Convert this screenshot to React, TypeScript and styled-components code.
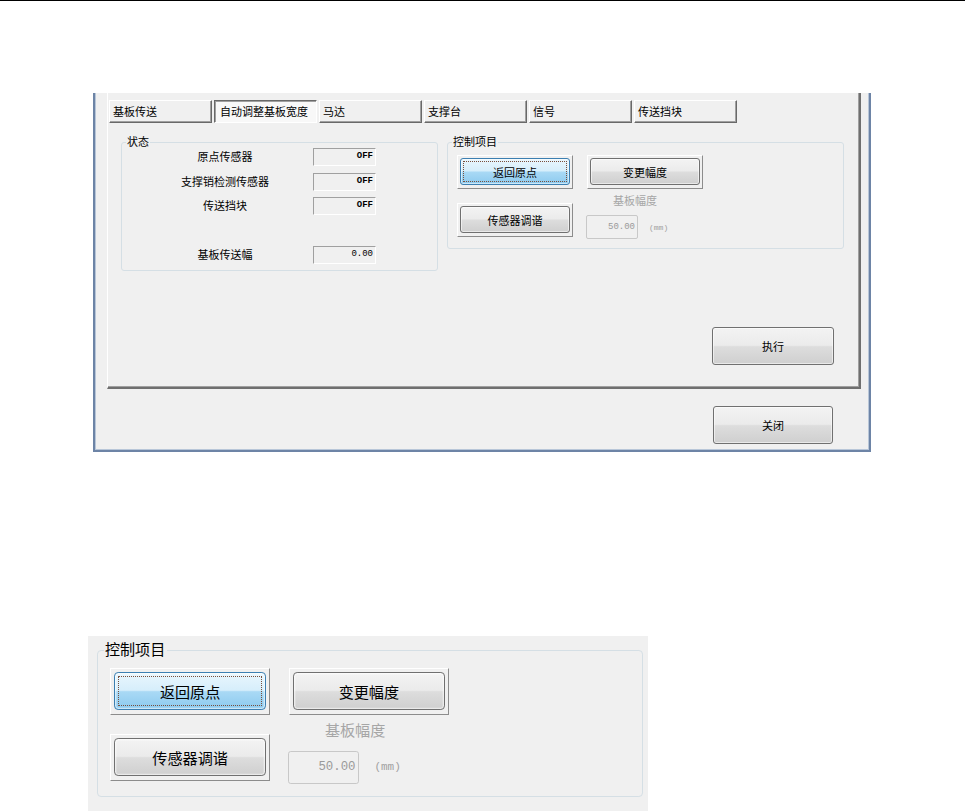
import React from "react";
import styled, { createGlobalStyle } from "styled-components";

const GlobalStyle = createGlobalStyle`
  html, body {
    margin: 0;
    padding: 0;
    background: #fff;
    overflow: hidden;
  }
  body {
    font-family: "Liberation Sans", "Noto Sans CJK SC", sans-serif;
    font-size: 11px;
    color: #000;
  }
`;

const tabs = ["基板传送", "自动调整基板宽度", "马达", "支撑台", "信号", "传送挡块"];
const activeTab = 1;

const statusRows = [
  { label: "原点传感器", value: "OFF", bold: true },
  { label: "支撑销检测传感器", value: "OFF", bold: true },
  { label: "传送挡块", value: "OFF", bold: true },
  { label: "基板传送幅", value: "0.00", spaced: true },
];

const ControlGroup: React.FC = () => (
  <Group $width={397}>
    <GroupTitle>控制项目</GroupTitle>
    <ControlGrid>
      <ButtonColumn>
        <ButtonFrame>
          <DialogButton $focused>返回原点</DialogButton>
        </ButtonFrame>
        <ButtonFrame>
          <DialogButton>传感器调谐</DialogButton>
        </ButtonFrame>
      </ButtonColumn>
      <WidthColumn>
        <ButtonFrame>
          <DialogButton>变更幅度</DialogButton>
        </ButtonFrame>
        <DisabledLabel>基板幅度</DisabledLabel>
        <WidthRow>
          <WidthInput>50.00</WidthInput>
          <Unit>(mm)</Unit>
        </WidthRow>
      </WidthColumn>
    </ControlGrid>
  </Group>
);

const App: React.FC = () => {
  return (
    <>
      <GlobalStyle />
      <TopRule />
      <Dialog>
        <TabPanel>
          <TabStrip>
            {tabs.map((tab, index) => (
              <Tab key={tab} $active={index === activeTab}>
                {tab}
              </Tab>
            ))}
          </TabStrip>
          <GroupsRow>
            <Group $width={317}>
              <GroupTitle>状态</GroupTitle>
              <StatusList>
                {statusRows.map((row) => (
                  <StatusRow key={row.label} $spaced={row.spaced}>
                    <StatusLabel>{row.label}</StatusLabel>
                    <ValueBox $bold={row.bold}>{row.value}</ValueBox>
                  </StatusRow>
                ))}
              </StatusList>
            </Group>
            <ControlGroup />
          </GroupsRow>
          <ExecuteRow>
            <DialogButton $w={122} $h={38}>
              执行
            </DialogButton>
          </ExecuteRow>
        </TabPanel>
        <Footer>
          <DialogButton $w={120} $h={38}>
            关闭
          </DialogButton>
        </Footer>
      </Dialog>
      <Closeup>
        <Magnifier>
          <ControlGroup />
        </Magnifier>
      </Closeup>
    </>
  );
};

export default App;

const TopRule = styled.div`
  height: 1px;
  background: #000;
`;

const Dialog = styled.div`
  box-sizing: border-box;
  width: 778px;
  margin: 92px 0 0 93px;
  background: #f0f0f0;
  border: 2px solid #6d84a6;
  border-top: none;
  box-shadow: inset 1px 0 0 #b8c6d8, inset -1px 0 0 #b8c6d8, inset 0 -1px 0 #b8c6d8;
`;

const TabPanel = styled.div`
  box-sizing: border-box;
  width: 754px;
  height: 296px;
  margin-left: 12px;
  padding-top: 7px;
  display: flex;
  flex-direction: column;
  border-left: 1px solid #fff;
  border-right: 2px solid #6f6f6f;
  border-bottom: 2px solid #6f6f6f;
  box-shadow: inset -1px -1px 0 #a0a0a0;
`;

const TabStrip = styled.div`
  display: flex;
  gap: 2px;
  padding-left: 1px;
`;

const Tab = styled.div<{ $active?: boolean }>`
  box-sizing: border-box;
  width: 103px;
  height: 23px;
  display: flex;
  align-items: center;
  padding: ${(p) => (p.$active ? "1px 0 0 5px" : "0 0 0 3px")};
  border: 1px solid;
  border-color: ${(p) =>
    p.$active ? "#696969 #fff #fff #696969" : "#fff #696969 #696969 #fff"};
  box-shadow: ${(p) =>
    p.$active ? "inset 1px 1px 0 #a0a0a0" : "inset -1px -1px 0 #a0a0a0"};
  background: ${(p) => (p.$active ? "#f8f8f8" : "#f0f0f0")};
  white-space: nowrap;
  line-height: 12px;
`;

const GroupsRow = styled.div`
  display: flex;
  align-items: flex-start;
  gap: 9px;
  margin-top: 13px;
  padding-left: 13px;
`;

const Group = styled.fieldset<{ $width: number }>`
  box-sizing: border-box;
  width: ${(p) => p.$width}px;
  min-width: 0;
  margin: 0;
  padding: 0;
  border: 1px solid #d5dfe5;
  border-radius: 3px;
`;

const GroupTitle = styled.legend`
  margin-left: 4px;
  padding: 0 1px;
  font-size: 11px;
  line-height: 12px;
`;

const StatusList = styled.div`
  display: flex;
  flex-direction: column;
  gap: 6.5px;
  padding-bottom: 6px;
`;

const StatusRow = styled.div<{ $spaced?: boolean }>`
  display: flex;
  align-items: center;
  height: 18px;
  margin-top: ${(p) => (p.$spaced ? "24.5px" : "0")};
`;

const StatusLabel = styled.span`
  width: 170px;
  margin-left: 18px;
  margin-right: 3px;
  text-align: center;
  line-height: 12px;
  white-space: nowrap;
`;

const ValueBox = styled.div<{ $bold?: boolean }>`
  box-sizing: border-box;
  width: 63px;
  height: 18px;
  padding: 1px 2px 0 0;
  border: 1px solid;
  border-color: #a0a0a0 #fff #fff #a0a0a0;
  background: #f0f0f0;
  font-family: "Liberation Mono", monospace;
  font-size: 9px;
  font-weight: ${(p) => (p.$bold ? "bold" : "normal")};
  line-height: 12px;
  text-align: right;
`;

const ControlGrid = styled.div`
  display: flex;
  gap: 14px;
  padding: 7px 0 9px 9px;
`;

const ButtonColumn = styled.div`
  display: flex;
  flex-direction: column;
  gap: 14px;
`;

const WidthColumn = styled.div`
  display: flex;
  flex-direction: column;
  width: 116px;
`;

const ButtonFrame = styled.div`
  box-sizing: border-box;
  width: 116px;
  height: 34px;
  padding: 2px 2px 3px 2px;
  border: 1px solid;
  border-color: #fff #8c8c8c #8c8c8c #fff;
`;

const DialogButton = styled.button<{ $focused?: boolean; $w?: number; $h?: number }>`
  position: relative;
  box-sizing: border-box;
  width: ${(p) => (p.$w ? `${p.$w}px` : "100%")};
  height: ${(p) => (p.$h ? `${p.$h}px` : "100%")};
  padding: 0;
  font-family: "Liberation Sans", "Noto Sans CJK SC", sans-serif;
  font-size: 11px;
  color: #000;
  border: 1px solid ${(p) => (p.$focused ? "#3c7fb1" : "#707070")};
  border-radius: 3px;
  background: ${(p) =>
    p.$focused
      ? "linear-gradient(#e9f6fd 0%, #d6eefb 48%, #a9d9f5 52%, #8ccaef 100%)"
      : "linear-gradient(#f3f3f3 0%, #ebebeb 48%, #dddddd 52%, #cfcfcf 100%)"};
  box-shadow: inset 0 0 0 1px rgba(255, 255, 255, 0.55);

  &::after {
    content: "";
    display: ${(p) => (p.$focused ? "block" : "none")};
    position: absolute;
    inset: 2px;
    border: 1px dotted #7a4f3c;
  }
`;

const DisabledLabel = styled.div`
  width: 96px;
  margin-top: 6px;
  text-align: center;
  line-height: 12px;
  color: #a6a6a6;
`;

const WidthRow = styled.div`
  display: flex;
  align-items: center;
  margin-top: 8px;
  margin-left: -1px;
`;

const WidthInput = styled.div`
  box-sizing: border-box;
  width: 52px;
  height: 24px;
  padding-right: 2px;
  border: 1px solid #c8c8c8;
  border-radius: 2px;
  background: #f0f0f0;
  font-family: "Liberation Mono", monospace;
  font-size: 9px;
  line-height: 22px;
  text-align: right;
  color: #9a9a9a;
`;

const Unit = styled.span`
  margin-left: 11px;
  font-family: "Liberation Mono", monospace;
  font-size: 8px;
  color: #a0a0a0;
`;

const ExecuteRow = styled.div`
  display: flex;
  justify-content: flex-end;
  margin-top: auto;
  padding: 0 25px 22px 0;
`;

const Footer = styled.div`
  display: flex;
  justify-content: flex-end;
  padding: 17px 36px 6px 0;
`;

const Closeup = styled.section`
  box-sizing: border-box;
  width: 560px;
  height: 175px;
  margin: 184px 0 0 88px;
  padding: 6px 0 0 9px;
  background: #f0f0f0;
  overflow: hidden;
`;

const Magnifier = styled.div`
  zoom: 1.375;
  width: max-content;
`;
